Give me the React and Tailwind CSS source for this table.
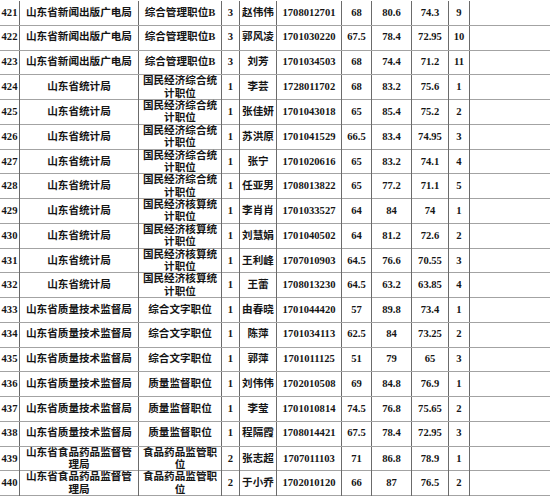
import React from 'react';

const rows = [
  ['421', '山东省新闻出版广电局', '综合管理职位B', '3', '赵伟伟', '1708012701', '68', '80.6', '74.3', '9'],
  ['422', '山东省新闻出版广电局', '综合管理职位B', '3', '郭风凌', '1701030220', '67.5', '78.4', '72.95', '10'],
  ['423', '山东省新闻出版广电局', '综合管理职位B', '3', '刘芳', '1701034503', '68', '74.4', '71.2', '11'],
  ['424', '山东省统计局', '国民经济综合统\n计职位', '1', '李芸', '1728011702', '68', '83.2', '75.6', '1'],
  ['425', '山东省统计局', '国民经济综合统\n计职位', '1', '张佳妍', '1701043018', '65', '85.4', '75.2', '2'],
  ['426', '山东省统计局', '国民经济综合统\n计职位', '1', '苏洪原', '1701041529', '66.5', '83.4', '74.95', '3'],
  ['427', '山东省统计局', '国民经济综合统\n计职位', '1', '张宁', '1701020616', '65', '83.2', '74.1', '4'],
  ['428', '山东省统计局', '国民经济综合统\n计职位', '1', '任亚男', '1708013822', '65', '77.2', '71.1', '5'],
  ['429', '山东省统计局', '国民经济核算统\n计职位', '1', '李肖肖', '1701033527', '64', '84', '74', '1'],
  ['430', '山东省统计局', '国民经济核算统\n计职位', '1', '刘慧娟', '1701040502', '64', '81.2', '72.6', '2'],
  ['431', '山东省统计局', '国民经济核算统\n计职位', '1', '王利峰', '1707010903', '64.5', '76.6', '70.55', '3'],
  ['432', '山东省统计局', '国民经济核算统\n计职位', '1', '王蕾', '1708013230', '64.5', '63.2', '63.85', '4'],
  ['433', '山东省质量技术监督局', '综合文字职位', '1', '由春晓', '1701044420', '57', '89.8', '73.4', '1'],
  ['434', '山东省质量技术监督局', '综合文字职位', '1', '陈萍', '1701034113', '62.5', '84', '73.25', '2'],
  ['435', '山东省质量技术监督局', '综合文字职位', '1', '郭萍', '1701011125', '51', '79', '65', '3'],
  ['436', '山东省质量技术监督局', '质量监督职位', '1', '刘伟伟', '1702010508', '69', '84.8', '76.9', '1'],
  ['437', '山东省质量技术监督局', '质量监督职位', '1', '李莹', '1701010814', '74.5', '76.8', '75.65', '2'],
  ['438', '山东省质量技术监督局', '质量监督职位', '1', '程隔霞', '1708014421', '67.5', '78.4', '72.95', '3'],
  ['439', '山东省食品药品监督管\n理局', '食品药品监管职\n位', '2', '张志超', '1707011103', '71', '86.8', '78.9', '1'],
  ['440', '山东省食品药品监督管\n理局', '食品药品监管职\n位', '2', '于小乔', '1702010120', '66', '87', '76.5', '2'],
];

function Row({ cells }) {
  return (
    <div className="grid h-[24.75px] grid-cols-[20px_119px_83px_18px_37px_65px_30px_40px_37px_21px_1fr] border-b border-[#a3a3a3]">
      {cells.map((c, i) => (
        <div
          key={i}
          className="flex items-center justify-center whitespace-pre-line border-r border-[#6b6b6b] text-center leading-[12.4px]"
        >
          {c}
        </div>
      ))}
      <div />
    </div>
  );
}

export default function App() {
  return (
    <div className="h-[497px] w-[550px] overflow-hidden bg-white pt-px font-['Liberation_Serif','Noto_Sans_CJK_SC',serif] text-[10.6px] font-semibold text-[#151515]">
      {rows.map((r) => (
        <Row key={r[0]} cells={r} />
      ))}
    </div>
  );
}
